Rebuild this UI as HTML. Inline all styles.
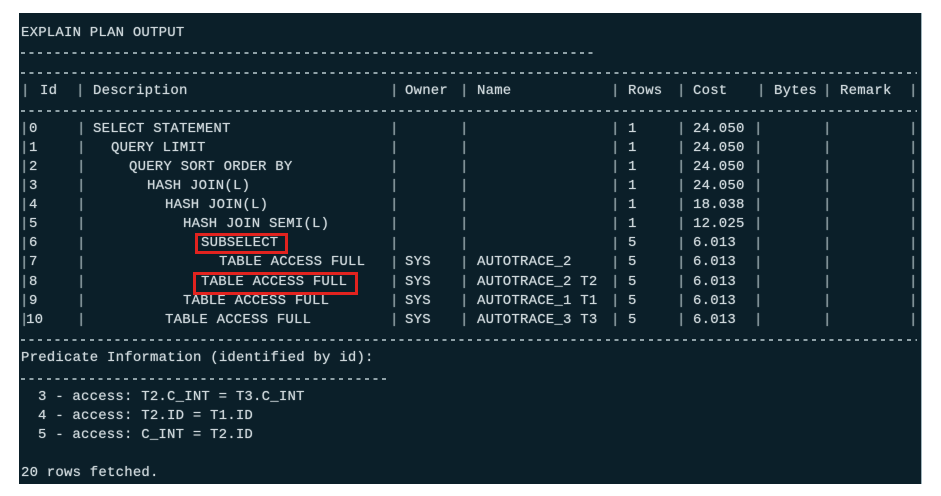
<!DOCTYPE html>
<html><head><meta charset="utf-8"><style>
html,body{margin:0;padding:0;background:#fff;width:941px;height:496px;overflow:hidden}
#p{position:absolute;left:19px;top:13px;width:902px;height:471px;background:#0b1f29;border-right:1px solid #9fb4bb}
#p span{position:absolute;white-space:pre;font-family:"Liberation Mono",monospace;font-size:14px;line-height:18px;color:#cdd6da;letter-spacing:0.2px;text-shadow:0 0 1px #aab8bd}
#p span.b{color:#8a9aa0}
.d{position:absolute;height:2px;background:repeating-linear-gradient(90deg,#8fa1a7 0 4px,transparent 4px 8.6px)}
.box{position:absolute;border:3px solid #e2231f;box-sizing:border-box}
</style></head><body><div id="p">
<span style="left:2px;top:11px">EXPLAIN PLAN OUTPUT</span>
<div class="d" style="left:2px;top:39px;width:574px"></div>
<div class="d" style="left:2px;top:59px;width:896px"></div>
<span class="b" style="left:2px;top:69px">|</span><span style="left:21px;top:69px">Id</span>
<span class="b" style="left:57px;top:69px">|</span><span style="left:74px;top:69px">Description</span>
<span class="b" style="left:371px;top:69px">|</span><span style="left:386px;top:69px">Owner</span>
<span class="b" style="left:441px;top:69px">|</span><span style="left:458px;top:69px">Name</span>
<span class="b" style="left:592px;top:69px">|</span><span style="left:609px;top:69px">Rows</span>
<span class="b" style="left:658px;top:69px">|</span><span style="left:674px;top:69px">Cost</span>
<span class="b" style="left:738px;top:69px">|</span><span style="left:755px;top:69px">Bytes</span>
<span class="b" style="left:804px;top:69px">|</span><span style="left:821px;top:69px">Remark</span>
<span class="b" style="left:890px;top:69px">|</span>
<div class="d" style="left:2px;top:97px;width:896px"></div>

<span style="left:10px;top:107px">0</span><span style="left:74px;top:107px">SELECT STATEMENT</span><span style="left:609px;top:107px">1</span><span style="left:674px;top:107px">24.050</span>
<span style="left:10px;top:126px">1</span><span style="left:92px;top:126px">QUERY LIMIT</span><span style="left:609px;top:126px">1</span><span style="left:674px;top:126px">24.050</span>
<span style="left:10px;top:145px">2</span><span style="left:110px;top:145px">QUERY SORT ORDER BY</span><span style="left:609px;top:145px">1</span><span style="left:674px;top:145px">24.050</span>
<span style="left:10px;top:164px">3</span><span style="left:128px;top:164px">HASH JOIN(L)</span><span style="left:609px;top:164px">1</span><span style="left:674px;top:164px">24.050</span>
<span style="left:10px;top:183px">4</span><span style="left:146px;top:183px">HASH JOIN(L)</span><span style="left:609px;top:183px">1</span><span style="left:674px;top:183px">18.038</span>
<span style="left:10px;top:202px">5</span><span style="left:164px;top:202px">HASH JOIN SEMI(L)</span><span style="left:609px;top:202px">1</span><span style="left:674px;top:202px">12.025</span>
<span style="left:10px;top:221px">6</span><span style="left:182px;top:221px">SUBSELECT</span><span style="left:609px;top:221px">5</span><span style="left:674px;top:221px">6.013</span>
<span style="left:10px;top:240px">7</span><span style="left:200px;top:240px">TABLE ACCESS FULL</span><span style="left:386px;top:240px">SYS</span><span style="left:458px;top:240px">AUTOTRACE_2</span><span style="left:609px;top:240px">5</span><span style="left:674px;top:240px">6.013</span>
<span style="left:10px;top:260px">8</span><span style="left:182px;top:260px">TABLE ACCESS FULL</span><span style="left:386px;top:260px">SYS</span><span style="left:458px;top:260px">AUTOTRACE_2 T2</span><span style="left:609px;top:260px">5</span><span style="left:674px;top:260px">6.013</span>
<span style="left:10px;top:279px">9</span><span style="left:164px;top:279px">TABLE ACCESS FULL</span><span style="left:386px;top:279px">SYS</span><span style="left:458px;top:279px">AUTOTRACE_1 T1</span><span style="left:609px;top:279px">5</span><span style="left:674px;top:279px">6.013</span>
<span style="left:7px;top:298px">10</span><span style="left:146px;top:298px">TABLE ACCESS FULL</span><span style="left:386px;top:298px">SYS</span><span style="left:458px;top:298px">AUTOTRACE_3 T3</span><span style="left:609px;top:298px">5</span><span style="left:674px;top:298px">6.013</span>

<span class="b" style="left:1px;top:107px">|
|
|
|
|
|
|
|
|
|
|</span>
<span class="b" style="left:58px;top:107px">|
|
|
|
|
|
|
|
|
|
|</span>
<span class="b" style="left:371px;top:107px">|
|
|
|
|
|
|
|
|
|
|</span>
<span class="b" style="left:441px;top:107px">|
|
|
|
|
|
|
|
|
|
|</span>
<span class="b" style="left:592px;top:107px">|
|
|
|
|
|
|
|
|
|
|</span>
<span class="b" style="left:658px;top:107px">|
|
|
|
|
|
|
|
|
|
|</span>
<span class="b" style="left:735px;top:107px">|
|
|
|
|
|
|
|
|
|
|</span>
<span class="b" style="left:804px;top:107px">|
|
|
|
|
|
|
|
|
|
|</span>
<span class="b" style="left:890px;top:107px">|
|
|
|
|
|
|
|
|
|
|</span>
<style>#p span.b[style*="top:107px"]{line-height:19.1px}</style>

<div class="box" style="left:176px;top:220px;width:93px;height:21px"></div>
<div class="box" style="left:174px;top:259px;width:165px;height:23px"></div>

<div class="d" style="left:2px;top:326px;width:896px"></div>
<span style="left:2px;top:336px">Predicate Information (identified by id):</span>
<div class="d" style="left:2px;top:365px;width:366px"></div>
<span style="left:19px;top:375px">3 - access: T2.C_INT = T3.C_INT</span>
<span style="left:19px;top:394px">4 - access: T2.ID = T1.ID</span>
<span style="left:19px;top:413px">5 - access: C_INT = T2.ID</span>
<span style="left:2px;top:451px">20 rows fetched.</span>
</div></body></html>
